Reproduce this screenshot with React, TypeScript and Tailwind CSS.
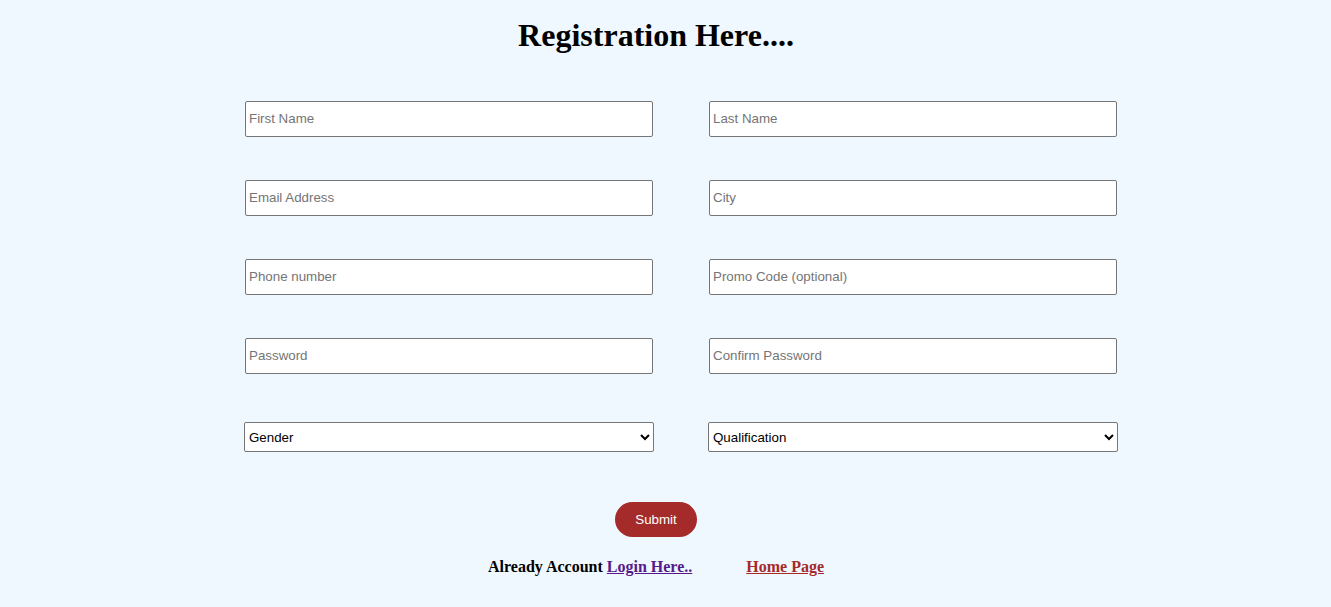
import React from "react";

const fields: [string, string][] = [
  ["First Name", "Last Name"],
  ["Email Address", "City"],
  ["Phone number", "Promo Code (optional)"],
  ["Password", "Confirm Password"],
];

const inputCls =
  "w-[408px] h-[36px] bg-white border border-[#767676] rounded-[2px] px-[3px] pb-[1px] text-[13.333px] text-black placeholder:text-[#757575] outline-none";

const selectCls =
  "w-[410px] h-[30px] bg-white border border-[#767676] rounded-[2px] pl-0 text-[13.333px] text-black outline-none";

export default function App() {
  return (
    <div className="min-h-[607px] w-full bg-[#f0f8ff]" style={{ fontFamily: "'Liberation Sans', Arial, sans-serif" }}>
      <div className="w-[1312px]">
        <h1
          className="text-center text-[32px] font-bold leading-[37px] pt-[17px] text-black"
          style={{ fontFamily: "'Liberation Serif', 'Times New Roman', serif" }}
        >
          Registration Here....
        </h1>

        {/* Form grid */}
        <form className="ml-[245px] mt-[47px] flex flex-col" onSubmit={(e) => e.preventDefault()}>
          <div className="flex flex-col gap-[43px]">
            {fields.map(([a, b]) => (
              <div key={a} className="flex gap-[56px]">
                <input type={a.includes("Password") ? "password" : "text"} placeholder={a} className={inputCls} />
                <input type={b.includes("Password") ? "password" : "text"} placeholder={b} className={inputCls} />
              </div>
            ))}
          </div>

          <div className="flex gap-[54px] -ml-[1px] mt-[48px]">
            <select className={selectCls} defaultValue="Gender">
              <option>Gender</option>
              <option>Male</option>
              <option>Female</option>
            </select>
            <select className={selectCls} defaultValue="Qualification">
              <option>Qualification</option>
              <option>Graduate</option>
              <option>Post Graduate</option>
            </select>
          </div>
        </form>

        <div className="flex justify-center mt-[50px]">
          <button className="w-[82px] h-[35px] rounded-full bg-[#a52a2a] text-white text-[13.333px]">Submit</button>
        </div>

        <div
          className="flex justify-center mt-[21px] text-[16px] font-bold leading-[18px]"
          style={{ fontFamily: "'Liberation Serif', 'Times New Roman', serif" }}
        >
          <span className="text-black">
            Already Account{" "}
            <a href="#" className="text-[#551a8b] underline">
              Login Here..
            </a>
          </span>
          <a href="#" className="ml-[54px] text-[#a52a2a] underline">
            Home Page
          </a>
        </div>
      </div>
    </div>
  );
}
